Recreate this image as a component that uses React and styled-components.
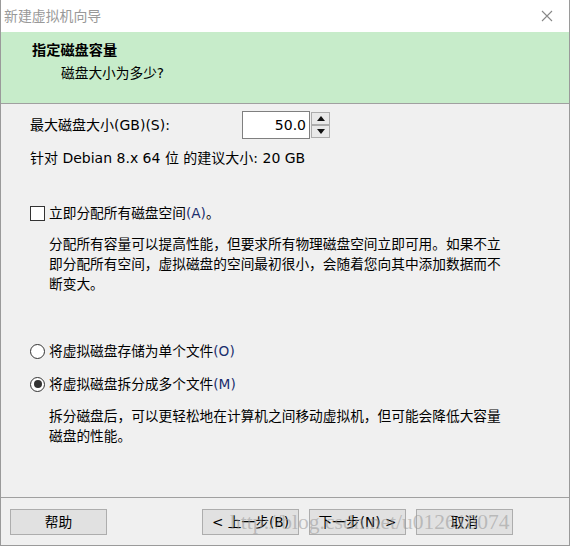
import React from 'react';
import styled, { createGlobalStyle } from 'styled-components';

const GlobalStyle = createGlobalStyle`
  html, body {
    margin: 0;
    padding: 0;
    background: #ffffff;
  }
  body {
    font-family: "DejaVu Sans", "Noto Sans CJK SC", sans-serif;
    font-size: 13.7px;
    color: #000;
  }
`;

const Window = styled.div`
  position: relative;
  width: 570px;
  height: 546px;
  box-sizing: border-box;
  display: flex;
  flex-direction: column;
  background: #f0f0f0;
  border-left: 1px solid #9a9a9a;
  border-right: 1px solid #9a9a9a;
  border-bottom: 1px solid #9a9a9a;
  overflow: hidden;
`;

const TitleBar = styled.div`
  height: 32px;
  flex: none;
  display: flex;
  align-items: center;
  justify-content: space-between;
  padding: 0 16px 0 3px;
  background: #ffffff;
`;

const TitleText = styled.span`
  color: #999999;
  font-size: 13.9px;
  line-height: 20px;
`;

const CloseIcon = styled.svg`
  width: 12px;
  height: 12px;
  display: block;
`;

const Header = styled.div`
  height: 72px;
  flex: none;
  box-sizing: border-box;
  background: #c7ecca;
  border-bottom: 1px solid #a0a0a0;
  padding: 8px 0 0 31px;
`;

const HeaderTitle = styled.div`
  font-weight: 700;
  font-size: 14.2px;
  line-height: 20px;
`;

const HeaderSub = styled.div`
  padding-left: 29px;
  margin-top: 3px;
  line-height: 20px;
`;

const Content = styled.div`
  flex: 1;
  padding: 7px 0 0 29px;
`;

const SizeRow = styled.div`
  display: flex;
  align-items: center;
  height: 28px;
`;

const Label = styled.span`
  width: 212px;
  line-height: 20px;
  font-size: 14px;
`;

const Spin = styled.div`
  display: flex;
  height: 28px;
`;

const NumberBox = styled.div`
  width: 68px;
  box-sizing: border-box;
  background: #ffffff;
  border: 1px solid #7f7f7f;
  text-align: right;
  padding-right: 3px;
  line-height: 26px;
  font-size: 14px;
`;

const SpinButtons = styled.div`
  display: flex;
  flex-direction: column;
  justify-content: space-between;
  width: 20px;
  padding: 1px 0 1px 1px;
  box-sizing: border-box;
`;

const SpinBtn = styled.div`
  height: 12px;
  background: #e9e9e9;
  border: 1px solid #adadad;
  display: flex;
  align-items: center;
  justify-content: center;
`;

const Line = styled.div`
  line-height: 20px;
  margin-top: ${p => p.$mt || 0}px;
  padding-left: ${p => p.$indent || 0}px;
  font-size: ${p => p.$size || 13.7}px;
`;

const OptionRow = styled.label`
  display: flex;
  align-items: center;
  gap: 4px;
  line-height: 20px;
  margin-top: ${p => p.$mt || 0}px;
`;

const CheckBox = styled.span`
  width: 13px;
  height: 13px;
  border: 1px solid #333333;
  background: #ffffff;
  flex: none;
`;

const Radio = styled.span`
  width: 13px;
  height: 13px;
  border: 1px solid #333333;
  border-radius: 50%;
  background: #ffffff;
  flex: none;
  display: flex;
  align-items: center;
  justify-content: center;

  &::after {
    content: '';
    display: ${p => (p.$checked ? 'block' : 'none')};
    width: 8px;
    height: 8px;
    border-radius: 50%;
    background: #333333;
  }
`;

const Key = styled.span`
  color: #1a2e6e;
`;

const Footer = styled.div`
  height: 48px;
  flex: none;
  box-sizing: border-box;
  border-top: 1px solid #a0a0a0;
  display: flex;
  align-items: flex-start;
  padding: 11px 0 0 9px;
`;

const Button = styled.div`
  width: 97px;
  height: 26px;
  box-sizing: border-box;
  background: #e1e1e1;
  border: 1px solid #adadad;
  display: flex;
  align-items: center;
  justify-content: center;
  line-height: 20px;
  margin-left: ${p => p.$ml || 0}px;
`;

const Watermark = styled.div`
  position: absolute;
  left: 229px;
  top: 509px;
  font-family: "Liberation Serif", serif;
  font-size: 21.5px;
  line-height: 26px;
  color: rgba(150, 150, 150, 0.55);
  white-space: nowrap;
  pointer-events: none;
`;

const Arrow = ({ up }) => (
  <svg width="8" height="5" viewBox="0 0 8 5">
    <path d={up ? 'M0 5 L4 0 L8 5 Z' : 'M0 0 L4 5 L8 0 Z'} fill="#111" />
  </svg>
);

export default function App() {
  return (
    <>
      <GlobalStyle />
      <Window>
        <TitleBar>
          <TitleText>新建虚拟机向导</TitleText>
          <CloseIcon viewBox="0 0 12 12">
            <path d="M1 1 L11 11 M11 1 L1 11" stroke="#888" strokeWidth="1.1" />
          </CloseIcon>
        </TitleBar>

        <Header>
          <HeaderTitle>指定磁盘容量</HeaderTitle>
          <HeaderSub>磁盘大小为多少?</HeaderSub>
        </Header>

        <Content>
          <SizeRow>
            <Label>最大磁盘大小(GB)(S):</Label>
            <Spin>
              <NumberBox>50.0</NumberBox>
              <SpinButtons>
                <SpinBtn><Arrow up /></SpinBtn>
                <SpinBtn><Arrow /></SpinBtn>
              </SpinButtons>
            </Spin>
          </SizeRow>
          <Line $mt={9} $size={14}>针对 Debian 8.x 64 位 的建议大小: 20 GB</Line>

          <OptionRow $mt={35}>
            <CheckBox />
            <span>立即分配所有磁盘空间<Key>(A)</Key>。</span>
          </OptionRow>
          <Line $mt={11} $indent={19}>
            分配所有容量可以提高性能，但要求所有物理磁盘空间立即可用。如果不立<br />
            即分配所有空间，虚拟磁盘的空间最初很小，会随着您向其中添加数据而不<br />
            断变大。
          </Line>

          <OptionRow $mt={47}>
            <Radio />
            <span>将虚拟磁盘存储为单个文件<Key>(O)</Key></span>
          </OptionRow>
          <OptionRow $mt={13}>
            <Radio $checked />
            <span>将虚拟磁盘拆分成多个文件<Key>(M)</Key></span>
          </OptionRow>
          <Line $mt={12} $indent={19}>
            拆分磁盘后，可以更轻松地在计算机之间移动虚拟机，但可能会降低大容量<br />
            磁盘的性能。
          </Line>
        </Content>

        <Footer>
          <Button>帮助</Button>
          <Button $ml={95}>&lt; 上一步(B)</Button>
          <Button $ml={10}>下一步(N) &gt;</Button>
          <Button $ml={10}>取消</Button>
        </Footer>

        <Watermark>http://blog.csdn.net/u012618074</Watermark>
      </Window>
    </>
  );
}
